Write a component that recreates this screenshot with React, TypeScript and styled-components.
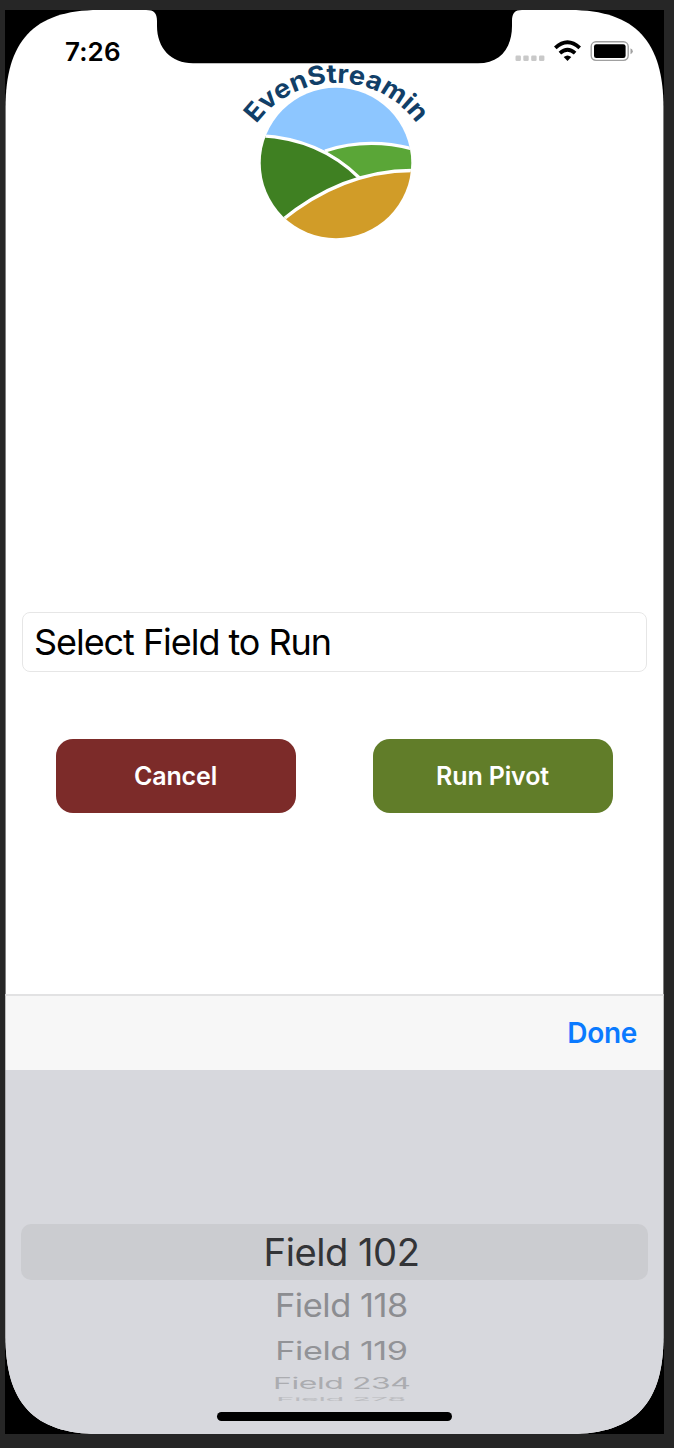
import React from "react";
import styled, { createGlobalStyle } from "styled-components";

const GlobalStyle = createGlobalStyle`
  * { box-sizing: border-box; }
  body { margin: 0; background: #262626; font-family: Inter, "Liberation Sans", sans-serif; }
`;

const Desktop = styled.div`
  width: 674px;
  height: 1448px;
  padding: 10px 10px 14px 5px;
  background: #262626;
`;

const Device = styled.div`
  position: relative;
  width: 659px;
  height: 1424px;
  background: #000;
`;

const Screen = styled.div`
  display: flex;
  flex-direction: column;
  height: 1424px;
  background: #fff;
  clip-path: path("M0.5 98 C0.5 32 28 0 94 0 H565 C631 0 658.5 32 658.5 98 V1326 C658.5 1392 631 1424 565 1424 H94 C28 1424 0.5 1392 0.5 1326 Z");
`;

const Notch = styled.svg`
  position: absolute;
  top: 0;
  left: 141px;
`;

const StatusBar = styled.header`
  display: flex;
  justify-content: space-between;
  height: 54px;
  padding: 26px 30px 0 60px;
`;

const Clock = styled.span`
  font-size: 26px;
  line-height: 31px;
  font-weight: 600;
  letter-spacing: 0.1px;
`;

const StatusGlyphs = styled.svg`
  margin-top: 2px;
`;

const LogoArea = styled.div`
  display: flex;
  justify-content: center;
  height: 548px;
  padding-left: 2px;
`;

const LogoMark = styled.svg`
  overflow: visible;
`;

const FieldInput = styled.div`
  display: flex;
  align-items: center;
  height: 60px;
  margin: 0 17px;
  padding-left: 11px;
  border: 1px solid #e6e6e6;
  border-radius: 8px;
  font-size: 36px;
  letter-spacing: -1.05px;
  white-space: nowrap;
`;

const Actions = styled.div`
  display: flex;
  justify-content: space-between;
  margin: 67px 51px 0;
  height: 74px;
`;

const ActionButton = styled.button<{ $color: string }>`
  width: 240px;
  height: 74px;
  padding: 0 1px 0 0;
  border: 0;
  border-radius: 17px;
  background: ${(p) => p.$color};
  color: #fff;
  font: 600 25px/74px Inter, sans-serif;
  letter-spacing: -0.15px;
`;

const Toolbar = styled.div`
  display: flex;
  align-items: center;
  justify-content: flex-end;
  height: 76px;
  margin-top: auto;
  padding-right: 27px;
  background: #f7f7f7;
  border-top: 2px solid #e2e2e3;
`;

const DoneButton = styled.button`
  padding: 0;
  border: 0;
  background: none;
  color: #0a7aff;
  font: 600 28px/34px Inter, sans-serif;
  letter-spacing: -0.3px;
`;

const Picker = styled.div`
  display: flex;
  flex-direction: column;
  height: 364px;
  padding: 154px 16px 0;
  background: #d7d8dd;
`;

const PickerRow = styled.div<{ $height: number; $selected?: boolean }>`
  display: flex;
  align-items: center;
  justify-content: center;
  height: ${(p) => p.$height}px;
  padding-left: 14px;
  overflow: hidden;
  border-radius: ${(p) => (p.$selected ? 10 : 0)}px;
  background: ${(p) => (p.$selected ? "#cbccd0" : "transparent")};
`;

const PickerLabel = styled.span<{ $sx: number; $sy: number; $color: string }>`
  flex: none;
  font-size: 38px;
  line-height: 46px;
  letter-spacing: -0.5px;
  white-space: nowrap;
  color: ${(p) => p.$color};
  transform: scale(${(p) => p.$sx}, ${(p) => p.$sy});
`;

const HomeIndicator = styled.div`
  width: 235px;
  height: 9px;
  margin: auto auto 13px 196px;
  flex: none;
  border-radius: 5px;
  background: #000;
`;

const rows = [
  { label: "Field 102", height: 56, sx: 1.005, sy: 1, color: "#333437" },
  { label: "Field 118", height: 50, sx: 0.905, sy: 0.84, color: "#8c8d91" },
  { label: "Field 119", height: 41, sx: 0.9, sy: 0.67, color: "#929397" },
  { label: "Field 234", height: 24, sx: 0.84, sy: 0.43, color: "#abacb0" },
  { label: "Field 278", height: 8, sx: 0.81, sy: 0.13, color: "#bbbcc0" },
];

function StatusIcons() {
  return (
    <StatusGlyphs width="124" height="24" viewBox="510 38 124 24">
      {[515.5, 523.3, 531.2, 539].map((x) => (
        <rect key={x} x={x} y="55.5" width="5.4" height="5.4" rx="1.2" fill="#c9c9c9" />
      ))}
      <g fill="none" stroke="#000" strokeWidth="3.8">
        <path d="M555.3 47.9 Q567.5 36.6 579.7 47.9" />
        <path d="M559.9 53.1 Q567.5 46.3 575.1 53.1" />
      </g>
      <path d="M563.7 57 Q567.5 53.8 571.3 57 L567.5 61 Z" />
      <rect x="591.2" y="41.8" width="37" height="18.6" rx="4.8" fill="#fff" stroke="#a0a0a0" strokeWidth="1.4" />
      <rect x="594" y="44.3" width="31.6" height="13.8" rx="2.3" />
      <path d="M630.5 48.2 Q632.8 49 632.8 51.2 Q632.8 53.4 630.5 54.2 Z" fill="#a0a0a0" />
    </StatusGlyphs>
  );
}

function Logo() {
  return (
    <LogoMark width="200" height="180" viewBox="236 64 200 180">
      <defs>
        <clipPath id="disc"><circle cx="336" cy="163" r="75.3" /></clipPath>
        <path id="arc" d="M256.2 124.2 A99 99 0 0 1 420 128.4" />
      </defs>
      <g clipPath="url(#disc)">
        <path d="M255 85 H415 V150 Q367 137 325 151 Q290 135.5 255 135.5 Z" fill="#8dc6ff" />
        <path d="M325 151 Q367 137 413 149 V170.5 Q385 170 359.5 178 Q345 163 325 151 Z" fill="#5aa637" />
        <path d="M255 135.5 Q318 137 359.5 178 Q320 190 282 220 H255 Z" fill="#3f8022" />
        <path d="M282 220 Q343 170 414 170.5 V242 H280 Z" fill="#d19c28" />
        <g fill="none" stroke="#fff" strokeWidth="3.3">
          <path d="M325 151 Q367 137 413 149" />
          <path d="M255 135.5 Q318 137 359.5 178" />
          <path d="M280 221.7 Q343 170 414 170.5" />
        </g>
      </g>
      <text fill="#113f68" fontFamily="Inter, sans-serif" fontSize="26" fontWeight="700">
        <textPath href="#arc" textLength="187" lengthAdjust="spacingAndGlyphs">EvenStreamin</textPath>
      </text>
    </LogoMark>
  );
}

export default function App() {
  return (
    <Desktop>
      <GlobalStyle />
      <Device>
        <Screen>
          <StatusBar>
            <Clock>7:26</Clock>
            <StatusIcons />
          </StatusBar>
          <LogoArea><Logo /></LogoArea>
          <FieldInput>Select Field to Run</FieldInput>
          <Actions>
            <ActionButton $color="#7c2b29">Cancel</ActionButton>
            <ActionButton $color="#617d29">Run Pivot</ActionButton>
          </Actions>
          <Toolbar><DoneButton>Done</DoneButton></Toolbar>
          <Picker>
            {rows.map((r, i) => (
              <PickerRow key={r.label} $height={r.height} $selected={i === 0}>
                <PickerLabel $sx={r.sx} $sy={r.sy} $color={r.color}>{r.label}</PickerLabel>
              </PickerRow>
            ))}
            <HomeIndicator />
          </Picker>
        </Screen>
        <Notch width="376" height="54" viewBox="141 0 376 54">
          <path d="M141 0 C149 0 152 3 152 11 V16 C152 38 166 53.3 188 53.3 H473 C495 53.3 507 38 507 16 V11 C507 3 510 0 517 0 Z" />
        </Notch>
      </Device>
    </Desktop>
  );
}
